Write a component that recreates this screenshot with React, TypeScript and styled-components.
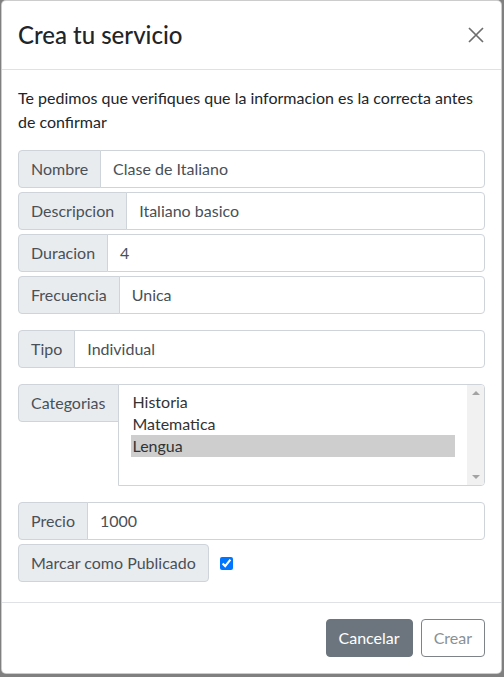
import React from "react";
import styled, { createGlobalStyle } from "styled-components";

const GlobalStyle = createGlobalStyle`
  * { box-sizing: border-box; }
  html, body { margin: 0; padding: 0; }
  body {
    background: #808080;
    font-family: "Lato", "Liberation Sans", "Noto Sans", sans-serif;
    font-size: 16px;
    line-height: 1.5;
    color: #212529;
  }
`;

const Backdrop = styled.div`
  padding: 0 0 0 1px;
  min-height: 677px;
`;

const Modal = styled.div`
  width: 501px;
  background: #fff;
  border: 1px solid rgba(0, 0, 0, 0.2);
  border-radius: 5px;
  display: flex;
  flex-direction: column;
`;

const Header = styled.div`
  display: flex;
  align-items: center;
  justify-content: space-between;
  padding: 16px;
  border-bottom: 1px solid #dee2e6;
`;

const Title = styled.h4`
  margin: 0;
  font-size: 24px;
  line-height: 36px;
  font-weight: 500;
  color: #212529;
`;

const CloseButton = styled.button`
  border: 0;
  background: transparent;
  padding: 0;
  margin-right: 1px;
  width: 16px;
  height: 16px;
  display: flex;
  cursor: pointer;
`;

const Body = styled.div`
  padding: 16px;
`;

const Intro = styled.p`
  margin: 0 0 16px;
  line-height: 24px;
`;

const Group = styled.div<{ $gap: number }>`
  display: flex;
  align-items: flex-start;
  margin-bottom: ${(p) => p.$gap}px;
`;

const Addon = styled.span<{ $alone?: boolean }>`
  display: flex;
  align-items: center;
  height: 38px;
  padding: 6px 12px;
  background: #e9ecef;
  border: 1px solid #ced4da;
  border-radius: ${(p) => (p.$alone ? "4px" : "4px 0 0 4px")};
  color: #495057;
  line-height: 24px;
  white-space: nowrap;
`;

const Field = styled.div`
  flex: 1;
  height: 38px;
  padding: 6px 12px;
  margin-left: -1px;
  border: 1px solid #ced4da;
  border-radius: 0 4px 4px 0;
  background: #fff;
  color: #495057;
  line-height: 24px;
`;

const ListBox = styled.div`
  flex: 1;
  display: flex;
  height: 102px;
  margin-left: -1px;
  border: 1px solid #ced4da;
  border-radius: 0 4px 4px 0;
  background: #fff;
  overflow: hidden;
`;

const OptionList = styled.div`
  flex: 1;
  padding: 6px 12px;
`;

const Option = styled.div<{ $selected?: boolean }>`
  height: 22px;
  line-height: 22px;
  padding: 0 2px;
  color: #333;
  background: ${(p) => (p.$selected ? "#cecece" : "transparent")};
`;

const Scrollbar = styled.div`
  width: 17px;
  background: #f1f1f1;
  display: flex;
  flex-direction: column;
  justify-content: space-between;
  align-items: center;
  padding: 6px 0;
`;

const Arrow = styled.span<{ $down?: boolean }>`
  width: 0;
  height: 0;
  border-left: 4px solid transparent;
  border-right: 4px solid transparent;
  ${(p) =>
    p.$down ? "border-top: 4px solid #a3a3a3;" : "border-bottom: 4px solid #a3a3a3;"}
`;

const CheckRow = styled.div`
  display: flex;
  align-items: center;
  margin-bottom: 4px;
`;

const Check = styled.input`
  width: 13px;
  height: 13px;
  margin: 0 0 0 11px;
  accent-color: #0075ff;
`;

const Footer = styled.div`
  display: flex;
  justify-content: flex-end;
  align-items: center;
  padding: 12px;
  border-top: 1px solid #dee2e6;
`;

const Button = styled.button<{ $variant: "solid" | "outline" }>`
  margin: 4px;
  padding: 6px 12px;
  height: 38px;
  font-family: inherit;
  font-size: 16px;
  line-height: 24px;
  border-radius: 4px;
  border: 1px solid ${(p) => (p.$variant === "solid" ? "#6c757d" : "#7d8389")};
  background: ${(p) => (p.$variant === "solid" ? "#6c757d" : "#fff")};
  color: ${(p) => (p.$variant === "solid" ? "#fff" : "#8a9095")};
  cursor: pointer;
`;

const fields: { label: string; value: string; gap: number }[] = [
  { label: "Nombre", value: "Clase de Italiano", gap: 4 },
  { label: "Descripcion", value: "Italiano basico", gap: 4 },
  { label: "Duracion", value: "4", gap: 4 },
  { label: "Frecuencia", value: "Unica", gap: 16 },
  { label: "Tipo", value: "Individual", gap: 16 },
];

const categories = ["Historia", "Matematica", "Lengua"];

export default function App() {
  return (
    <>
      <GlobalStyle />
      <Backdrop>
        <Modal>
          <Header>
            <Title>Crea tu servicio</Title>
            <CloseButton aria-label="Close">
              <svg width="16" height="16" viewBox="0 0 16 16">
                <path
                  d="M1 1 L15 15 M15 1 L1 15"
                  stroke="#6e6e6e"
                  strokeWidth="1.7"
                  fill="none"
                />
              </svg>
            </CloseButton>
          </Header>
          <Body>
            <Intro>
              Te pedimos que verifiques que la informacion es la correcta antes de
              confirmar
            </Intro>
            {fields.map((f) => (
              <Group key={f.label} $gap={f.gap}>
                <Addon>{f.label}</Addon>
                <Field>{f.value}</Field>
              </Group>
            ))}
            <Group $gap={16}>
              <Addon>Categorias</Addon>
              <ListBox>
                <OptionList>
                  {categories.map((c) => (
                    <Option key={c} $selected={c === "Lengua"}>
                      {c}
                    </Option>
                  ))}
                </OptionList>
                <Scrollbar>
                  <Arrow />
                  <Arrow $down />
                </Scrollbar>
              </ListBox>
            </Group>
            <Group $gap={4}>
              <Addon>Precio</Addon>
              <Field>1000</Field>
            </Group>
            <CheckRow>
              <Addon $alone>Marcar como Publicado</Addon>
              <Check type="checkbox" checked readOnly />
            </CheckRow>
          </Body>
          <Footer>
            <Button $variant="solid">Cancelar</Button>
            <Button $variant="outline">Crear</Button>
          </Footer>
        </Modal>
      </Backdrop>
    </>
  );
}
